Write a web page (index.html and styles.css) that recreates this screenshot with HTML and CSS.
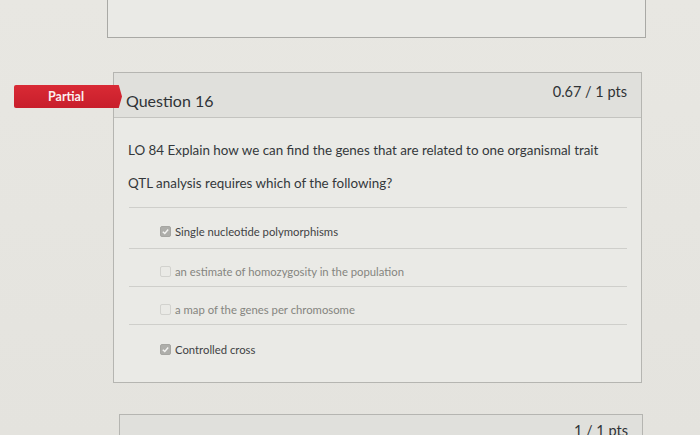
FILE: index.html
```html
<!DOCTYPE html>
<html>
<head>
<meta charset="utf-8">
<link rel="stylesheet" href="styles.css">
</head>
<body>
<div class="page">
  <div class="prev-card"></div>

  <div class="question-wrap">
    <div class="badge">Partial</div>
    <div class="card">
      <div class="card-header">
        <div class="q-title">Question 16</div>
        <div class="q-pts">0.67 / 1 pts</div>
      </div>
      <div class="card-body">
        <p class="q-text">LO 84 Explain how we can find the genes that are related to one organismal trait</p>
        <p class="q-text">QTL analysis requires which of the following?</p>
        <div class="answers">
          <div class="answer selected"><span class="box checked"><svg viewBox="0 0 10 10" width="9" height="9"><path d="M2 5.2 L4.2 7.3 L8 2.8" fill="none" stroke="#f4f4f2" stroke-width="1.6"/></svg></span><span class="a-text">Single nucleotide polymorphisms</span></div>
          <div class="answer"><span class="box"></span><span class="a-text">an estimate of homozygosity in the population</span></div>
          <div class="answer"><span class="box"></span><span class="a-text">a map of the genes per chromosome</span></div>
          <div class="answer selected"><span class="box checked"><svg viewBox="0 0 10 10" width="9" height="9"><path d="M2 5.2 L4.2 7.3 L8 2.8" fill="none" stroke="#f4f4f2" stroke-width="1.6"/></svg></span><span class="a-text">Controlled cross</span></div>
        </div>
      </div>
    </div>
  </div>

  <div class="next-card">
    <div class="card-header next-header">
      <div class="q-title"></div>
      <div class="q-pts">1 / 1 pts</div>
    </div>
  </div>
</div>
</body>
</html>
```

FILE: styles.css
```css
html, body {
  margin: 0;
  padding: 0;
  background: #e6e5e0;
  font-family: Lato, "Open Sans", sans-serif;
  overflow: hidden;
}
.page {
  width: 700px;
  height: 435px;
  display: flex;
  flex-direction: column;
  background: linear-gradient(180deg, #e8e7e2 0%, #e4e3de 100%);
}
.prev-card {
  margin-left: 107px;
  width: 537px;
  height: 37px;
  border: 1px solid #a9a9a5;
  border-top: none;
  background: #eaeae6;
  flex: none;
}
.question-wrap {
  position: relative;
  margin-top: 34px;
  padding-left: 113px;
  flex: none;
}
.badge {
  position: absolute;
  left: 14px;
  top: 13px;
  width: 108px;
  height: 23px;
  background: linear-gradient(180deg, #d92a35 0%, #c81e2b 100%);
  clip-path: polygon(0 0, 97% 0, 100% 50%, 97% 100%, 0 100%);
  color: #fbeff0;
  font-weight: 700;
  font-size: 12.5px;
  display: flex;
  align-items: center;
  padding-left: 34px;
  box-sizing: border-box;
  border-radius: 2px 0 0 2px;
}
.card {
  width: 527px;
  border: 1px solid #b5b5b1;
  background: #eaeae6;
}
.card-header {
  height: 44px;
  background: #e0e0dc;
  border-bottom: 1px solid #c4c4c0;
  display: flex;
  justify-content: space-between;
  padding: 0 14px 0 12px;
}
.q-title {
  font-size: 16px;
  color: #2f3336;
  padding-top: 18px;
}
.q-pts {
  font-size: 14.5px;
  color: #2f3336;
  padding-top: 10px;
}
.card-body {
  padding: 23px 14px 19px 14px;
}
.q-text {
  margin: 0 0 15px 0;
  font-size: 13.4px;
  line-height: 18px;
  color: #34383b;
}
.answers {
  margin-top: 8px;
  margin-left: 1px;
  border-top: 1px solid #cfcfcb;
}
.answer {
  height: 38px;
  padding-top: 15px;
  box-sizing: border-box;
  display: flex;
  align-items: flex-start;
  padding-left: 31px;
  border-bottom: 1px solid #cfcfcb;
}
.answer:first-child {
  height: 41px;
  padding-top: 16px;
}
.answer:last-child {
  border-bottom: none;
  height: 38px;
  padding-top: 17px;
}
.box {
  width: 11px;
  height: 11px;
  margin-top: 2px;
  margin-right: 4px;
  border: 1px solid #d2d2ce;
  border-radius: 2px;
  box-sizing: border-box;
  display: flex;
  align-items: center;
  justify-content: center;
  flex: none;
}
.box.checked {
  background: #aeaeaa;
  border-color: #a6a6a2;
}
.a-text {
  font-size: 11.3px;
  line-height: 16px;
  color: #85857f;
}
.answer.selected .a-text {
  color: #3f4244;
}
.next-card {
  margin-top: 31px;
  margin-left: 119px;
  width: 522px;
  border: 1px solid #b5b5b1;
  border-bottom: none;
  flex: none;
}
.next-header {
  height: 30px;
  border-bottom: none;
}
.next-header .q-pts {
  padding-top: 7px;
}
```
